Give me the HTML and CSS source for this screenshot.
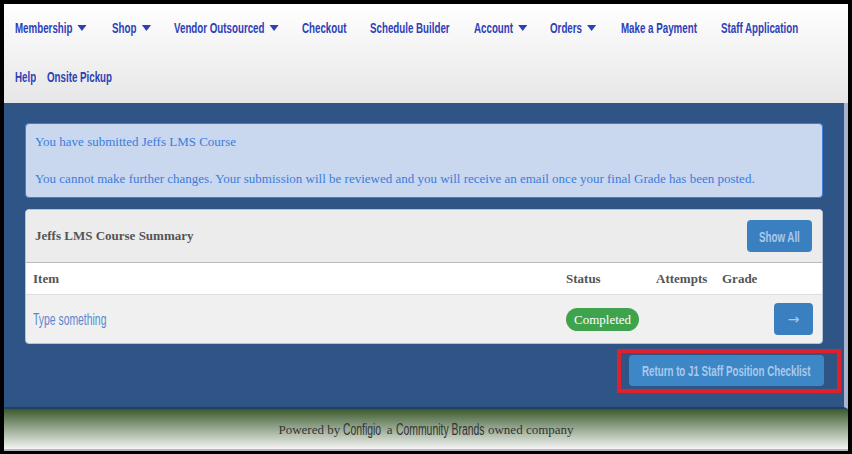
FILE: index.html
```html
<!DOCTYPE html>
<html>
<head>
    <title>Jeffs LMS Course</title>
    <meta charset="utf-8">
    <link rel="stylesheet" href="styles.css">
</head>
<body>
    <div class="screen">
        <nav class="topnav">
            <a class="w-membership" href="#"><span class="squeeze">Membership<i class="caret"></i></span></a>
            <a class="w-shop" href="#"><span class="squeeze">Shop<i class="caret"></i></span></a>
            <a class="w-vendor" href="#"><span class="squeeze">Vendor Outsourced<i class="caret"></i></span></a>
            <a class="w-checkout" href="#"><span class="squeeze">Checkout</span></a>
            <a class="w-schedule" href="#"><span class="squeeze">Schedule Builder</span></a>
            <a class="w-account" href="#"><span class="squeeze">Account<i class="caret"></i></span></a>
            <a class="w-orders" href="#"><span class="squeeze">Orders<i class="caret"></i></span></a>
            <a class="w-payment" href="#"><span class="squeeze">Make a Payment</span></a>
            <a class="w-staff" href="#"><span class="squeeze">Staff Application</span></a>
            <a class="w-help" href="#"><span class="squeeze">Help</span></a>
            <a class="w-pickup" href="#"><span class="squeeze">Onsite Pickup</span></a>
        </nav>

        <main class="content">
            <div class="alert">
                <p>You have submitted Jeffs LMS Course</p>
                <p>You cannot make further changes. Your submission will be reviewed and you will receive an email once your final Grade has been posted.</p>
            </div>

            <div class="panel">
                <div class="panel-head">
                    <h3>Jeffs LMS Course Summary</h3>
                    <button class="btn btn-showall"><span class="squeeze">Show All</span></button>
                </div>
                <table class="summary">
                    <thead>
                        <tr>
                            <th class="col-item">Item</th>
                            <th class="col-status">Status</th>
                            <th class="col-attempts">Attempts</th>
                            <th class="col-grade">Grade</th>
                            <th class="col-action"></th>
                        </tr>
                    </thead>
                    <tbody>
                        <tr>
                            <td><a class="item-link" href="#"><span class="squeeze">Type something</span></a></td>
                            <td><span class="pill">Completed</span></td>
                            <td></td>
                            <td></td>
                            <td><button class="btn btn-arrow">&rarr;</button></td>
                        </tr>
                    </tbody>
                </table>
            </div>

            <div class="actions">
                <div class="highlight">
                    <button class="btn btn-return"><span class="squeeze">Return to J1 Staff Position Checklist</span></button>
                </div>
            </div>
        </main>

        <footer class="footer">
            Powered by <span class="brand brand-configio"><span class="squeeze">Configio</span></span> a <span class="brand brand-cb"><span class="squeeze">Community Brands</span></span> owned company
        </footer>
    </div>
</body>
</html>
```

FILE: styles.css
```css
body {
    margin: 0;
    background: #000;
    font-family: "Liberation Serif", serif;
    overflow: hidden;
}

.screen {
    width: 844px;
    margin: 4px 0 0 4px;
}

/* narrow headline lettering, squeezed from Liberation Sans */
.squeeze {
    display: inline-block;
    white-space: nowrap;
    transform: scaleX(0.65);
    transform-origin: 0 50%;
}

/* top navigation */
.topnav {
    display: flex;
    flex-wrap: wrap;
    padding-bottom: 1px;
    background: linear-gradient(#ffffff, #e6e6e6);
}

.topnav a {
    display: block;
    box-sizing: border-box;
    overflow: hidden;
    padding: 14px 0 15px 11px;
    line-height: 20px;
    font-family: "Liberation Sans", sans-serif;
    font-weight: bold;
    font-size: 15px;
    color: #2d40b8;
    text-decoration: none;
}

.w-membership { width: 97px; }
.w-shop { width: 62px; }
.w-vendor { width: 128px; }
.w-checkout { width: 68px; }
.w-schedule { width: 104px; }
.w-account { width: 76px; }
.w-orders { width: 71px; }
.w-payment { width: 100px; }
.w-staff { width: 110px; }
.w-help { width: 32px; }
.w-pickup { width: 110px; }

.caret {
    display: inline-block;
    width: 0;
    height: 0;
    margin-left: 8px;
    vertical-align: 2px;
    border-left: 7px solid transparent;
    border-right: 7px solid transparent;
    border-top: 6px solid #2d40b8;
}

/* main area */
.content {
    background: #2f5486;
    border-right: 4px solid #a9b4cc;
    border-bottom: 2px solid #23405e;
    padding: 20px 21px 14px 21px;
}

.alert {
    background: #c9d7ef;
    border: 1px solid #3d7fd8;
    border-radius: 4px;
    padding: 9px 9px;
    color: #3b7ddb;
    font-size: 13px;
    margin-bottom: 11px;
}

.alert p {
    margin: 0;
    line-height: 18px;
}

.alert p:first-child {
    margin-bottom: 19px;
}

.panel {
    background: #f0f0f0;
    border: 1px solid #b8c4d4;
    border-radius: 4px;
    overflow: hidden;
}

.panel-head {
    display: flex;
    justify-content: space-between;
    align-items: center;
    background: #ececec;
    border-bottom: 1px solid #bbbbbb;
    padding: 10px 10px 10px 9px;
}

.panel-head h3 {
    margin: 0;
    font-size: 13px;
    color: #555;
}

.btn {
    border: 0;
    border-radius: 4px;
    background: #3a80c1;
    color: #a9c9ea;
    font-family: "Liberation Sans", sans-serif;
    font-weight: bold;
    font-size: 15px;
    height: 32px;
    text-align: left;
    overflow: hidden;
}

.btn-showall {
    width: 65px;
    padding: 0 0 0 12px;
}

.summary {
    width: 100%;
    border-collapse: collapse;
    table-layout: fixed;
}

.summary th {
    background: #fff;
    text-align: left;
    font-size: 13px;
    color: #555;
    height: 31px;
    padding: 0 7px;
    border-bottom: 1px solid #dddddd;
}

.summary td {
    padding: 8px 7px;
    height: 32px;
}

.col-item { width: 519px; }
.col-status { width: 76px; }
.col-attempts { width: 52px; }
.col-grade { width: 38px; }

.item-link {
    display: inline-block;
    width: 75px;
    overflow: hidden;
    vertical-align: middle;
    font-family: "Liberation Sans", sans-serif;
    font-size: 16px;
    color: #5a87d2;
    text-decoration: none;
}

.pill {
    display: inline-block;
    background: #3fa24c;
    color: #fff;
    font-size: 13px;
    line-height: 23px;
    padding: 0 8px;
    border-radius: 12px;
}

.btn-arrow {
    width: 39px;
    padding: 0;
    text-align: center;
    font-family: "DejaVu Sans", sans-serif;
    font-weight: normal;
    font-size: 14px;
}

.actions {
    display: flex;
    justify-content: flex-end;
    margin: 5px -18px 0 0;
}

.highlight {
    border: 4px solid #e0202a;
    padding: 2px 13px 3px 8px;
}

.btn-return {
    width: 195px;
    height: 31px;
    background: #3d87c7;
    padding: 0 0 0 13px;
}

/* footer */
.footer {
    background: linear-gradient(#3c5a2c, #90a38a 45%, #f4f4f4);
    border-bottom: 2px solid #b8b8b8;
    height: 39px;
    padding-top: 1px;
    line-height: 40px;
    text-align: center;
    color: #333;
    font-size: 13px;
}

.brand {
    display: inline-block;
    overflow: hidden;
    vertical-align: top;
    font-family: "Liberation Sans", sans-serif;
    font-size: 16px;
    text-align: left;
}

.brand-configio { width: 40px; }
.brand-cb { width: 89px; }
```
